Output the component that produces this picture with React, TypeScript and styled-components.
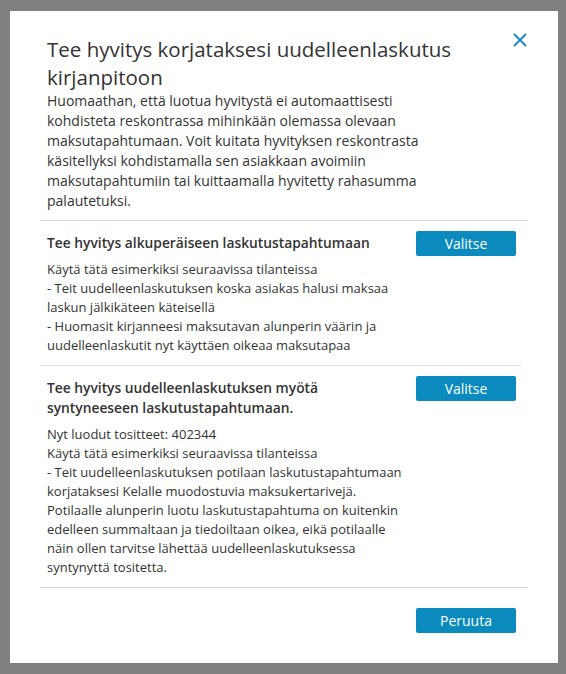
import React from "react";
import styled, { createGlobalStyle } from "styled-components";

const GlobalStyle = createGlobalStyle`
    body {
        margin: 0;
        background: #808080;
        font-family: "Open Sans", "Noto Sans", Arial, sans-serif;
        color: #333333;
    }
`;

const Overlay = styled.div`
    padding: 11px 8px 12px 10px;
`;

const Dialog = styled.div`
    width: 548px;
    box-sizing: border-box;
    background: #ffffff;
    padding: 24px 30px 30px;
`;

const Header = styled.div`
    display: flex;
    align-items: flex-start;
    margin-bottom: 9px;
`;

const HeaderText = styled.div`
    width: 424px;
    padding: 0 7px;
    box-sizing: border-box;
`;

const Title = styled.h2`
    margin: 0;
    font-size: 20.5px;
    font-weight: 400;
    line-height: 28px;
    color: #333333;
`;

const Intro = styled.p`
    margin: 0;
    font-size: 14px;
    line-height: 20px;
`;

const CloseButton = styled.button`
    margin: -2px 1px 0 auto;
    padding: 0;
    border: none;
    background: none;
    width: 14px;
    height: 14px;
    cursor: pointer;
    display: flex;
`;

const Section = styled.div<{ $inset?: boolean }>`
    display: grid;
    grid-template-columns: 1fr 100px;
    column-gap: 8px;
    align-items: start;
    padding: 10px 12px 10px 7px;
    border-top: 1px solid ${(p) => (p.$inset ? "#e2e2ea" : "#d4d9dd")};
    margin-right: ${(p) => (p.$inset ? "7px" : "0")};
    padding-right: ${(p) => (p.$inset ? "5px" : "12px")};
`;

const SectionTitle = styled.div`
    margin: 2px 0 7px;
    font-size: 13.8px;
    font-weight: 600;
    line-height: 20px;
    color: #333333;
`;

const SectionBody = styled.div`
    font-size: 13px;
    line-height: 19px;
`;

const Button = styled.button`
    width: 100px;
    height: 25px;
    padding: 0;
    border: none;
    border-radius: 2px;
    background: #0b8abe;
    color: #ffffff;
    font-family: inherit;
    font-size: 14px;
    line-height: 25px;
    cursor: pointer;
`;

const Footer = styled.div`
    display: flex;
    justify-content: flex-end;
    padding: 20px 12px 0 0;
    border-top: 1px solid #d0d5d9;
`;

interface Option {
    title: string;
    lines: string[];
    inset?: boolean;
}

const options: Option[] = [
    {
        title: "Tee hyvitys alkuperäiseen laskutustapahtumaan",
        lines: [
            "Käytä tätä esimerkiksi seuraavissa tilanteissa",
            "- Teit uudelleenlaskutuksen koska asiakas halusi maksaa laskun jälkikäteen käteisellä",
            "- Huomasit kirjanneesi maksutavan alunperin väärin ja uudelleenlaskutit nyt käyttäen oikeaa maksutapaa",
        ],
    },
    {
        title: "Tee hyvitys uudelleenlaskutuksen myötä syntyneeseen laskutustapahtumaan.",
        lines: [
            "Nyt luodut tositteet: 402344",
            "Käytä tätä esimerkiksi seuraavissa tilanteissa",
            "- Teit uudelleenlaskutuksen potilaan laskutustapahtumaan korjataksesi Kelalle muodostuvia maksukertarivejä. Potilaalle alunperin luotu laskutustapahtuma on kuitenkin edelleen summaltaan ja tiedoiltaan oikea, eikä potilaalle näin ollen tarvitse lähettää uudelleenlaskutuksessa syntynyttä tositetta.",
        ],
        inset: true,
    },
];

const App = () => {
    return (
        <>
            <GlobalStyle />
            <Overlay>
                <Dialog>
                    <Header>
                        <HeaderText>
                            <Title>Tee hyvitys korjataksesi uudelleenlaskutus kirjanpitoon</Title>
                            <Intro>
                                Huomaathan, että luotua hyvitystä ei automaattisesti kohdisteta reskontrassa
                                mihinkään olemassa olevaan maksutapahtumaan. Voit kuitata hyvityksen
                                reskontrasta käsitellyksi kohdistamalla sen asiakkaan avoimiin
                                maksutapahtumiin tai kuittaamalla hyvitetty rahasumma palautetuksi.
                            </Intro>
                        </HeaderText>
                        <CloseButton aria-label="Sulje">
                            <svg width="14" height="14" viewBox="0 0 14 14">
                                <path d="M1 1 L13 13 M13 1 L1 13" stroke="#1a8bc4" strokeWidth="2" fill="none" />
                            </svg>
                        </CloseButton>
                    </Header>
                    {options.map((opt) => (
                        <Section key={opt.title} $inset={opt.inset}>
                            <div>
                                <SectionTitle>{opt.title}</SectionTitle>
                                <SectionBody>
                                    {opt.lines.map((line) => (
                                        <div key={line}>{line}</div>
                                    ))}
                                </SectionBody>
                            </div>
                            <Button>Valitse</Button>
                        </Section>
                    ))}
                    <Footer>
                        <Button>Peruuta</Button>
                    </Footer>
                </Dialog>
            </Overlay>
        </>
    );
};

export default App;
